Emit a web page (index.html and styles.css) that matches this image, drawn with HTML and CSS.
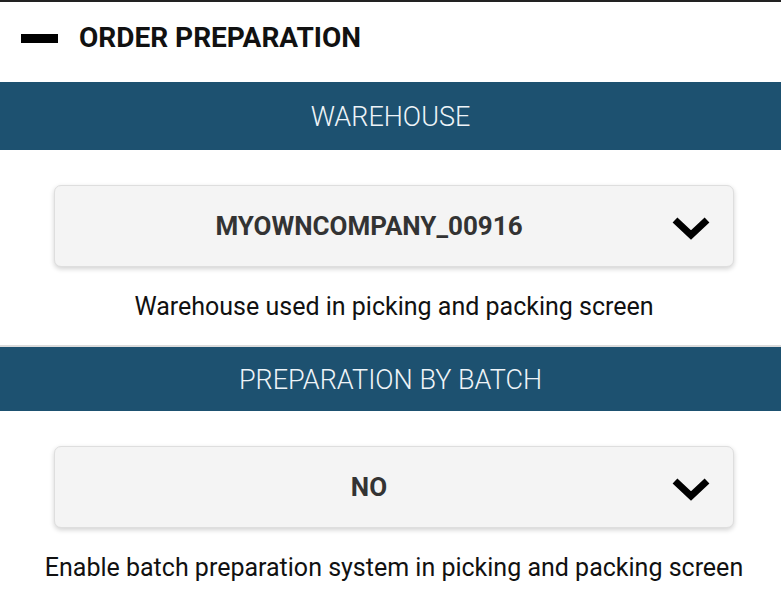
FILE: index.html
```html
<!DOCTYPE html>
<html lang="en">
<head>
    <meta charset="UTF-8">
    <meta name="viewport" content="width=device-width, initial-scale=1.0">
    <title>Order Preparation</title>
    <link rel="stylesheet" href="styles.css">
</head>
<body>
    <div class="page">
        <div class="page-header">
            <span class="collapse-icon"></span>
            <h1>ORDER PREPARATION</h1>
        </div>

        <div class="section-title">WAREHOUSE</div>
        <div class="setting">
            <div class="select-box">
                <span class="select-value">MYOWNCOMPANY_00916</span>
                <svg class="chevron" viewBox="0 0 40 24" width="40" height="24">
                    <polyline points="4,4 20,19 36,4" fill="none" stroke="#000" stroke-width="7"/>
                </svg>
            </div>
            <p class="setting-help">Warehouse used in picking and packing screen</p>
        </div>

        <div class="section-title divided">PREPARATION BY BATCH</div>
        <div class="setting">
            <div class="select-box">
                <span class="select-value">NO</span>
                <svg class="chevron" viewBox="0 0 40 24" width="40" height="24">
                    <polyline points="4,4 20,19 36,4" fill="none" stroke="#000" stroke-width="7"/>
                </svg>
            </div>
            <p class="setting-help">Enable batch preparation system in picking and packing screen</p>
        </div>
    </div>
</body>
</html>
```

FILE: styles.css
```css
body {
    margin: 0;
    padding: 0;
    font-family: Roboto, 'Liberation Sans', sans-serif;
    background: #fff;
    color: #111;
}
.page {
    border-top: 2px solid #222;
}
.page-header {
    display: flex;
    align-items: center;
    height: 80px;
    padding-left: 21px;
    padding-bottom: 10px;
    box-sizing: border-box;
    gap: 21px;
}
.collapse-icon {
    display: block;
    width: 37px;
    height: 9px;
    background: #000;
    margin-top: 3px;
}
h1 {
    margin: 0;
    font-size: 28px;
    font-weight: 700;
    color: #111;
}
.section-title {
    background-color: #1d5170;
    color: #eef4f8;
    font-weight: 300;
    font-size: 27px;
    text-align: center;
    height: 68px;
    line-height: 70px;
}
.section-title.divided {
    height: 64px;
    line-height: 66px;
    border-top: 2px solid #dcdcdc;
}
.setting {
    padding-top: 35px;
}
.select-box {
    display: flex;
    align-items: center;
    height: 80px;
    margin: 0 47px 0 54px;
    background: #f4f4f4;
    border: 1px solid #dedede;
    border-radius: 7px;
    box-shadow: 0 2px 5px rgba(0, 0, 0, 0.18);
    padding-right: 22px;
}
.select-value {
    flex: 1;
    text-align: center;
    font-size: 26px;
    font-weight: 700;
    color: #333;
    padding-left: 12px;
}
.chevron {
    display: block;
    margin-top: 4px;
}
.setting-help {
    margin: 0;
    padding-left: 7px;
    text-align: center;
    white-space: nowrap;
    font-size: 25px;
    color: #111;
    height: 78px;
    line-height: 80px;
}
```
